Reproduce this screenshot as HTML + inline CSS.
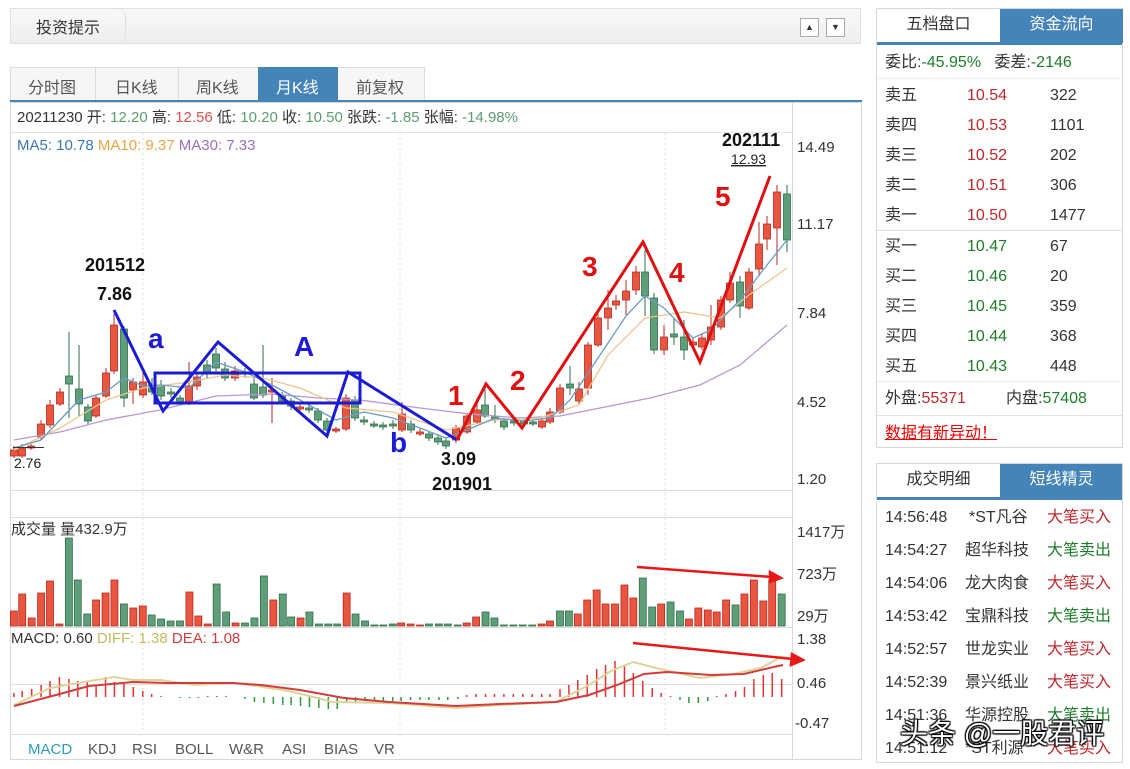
<!DOCTYPE html>
<html><head><meta charset="utf-8">
<style>
*{margin:0;padding:0;box-sizing:border-box}
body{width:1130px;height:769px;background:#fff;font-family:"Liberation Sans","Noto Sans CJK SC",sans-serif;position:relative;overflow:hidden;color:#333}
.a{position:absolute;white-space:nowrap}
.rp{position:absolute;border:1px solid #d8d8d8;background:#fff}
.tab2{position:absolute;top:0;height:34px;width:123px;font-size:16px;text-align:center;line-height:32px}
.row{position:absolute;left:8px;font-size:16px;height:20px;line-height:20px}
.r{color:#c0282c}.g{color:#1f7d2a}
</style></head><body>
<!-- top header -->
<div class="a" style="left:10px;top:8px;width:851px;height:36px;background:linear-gradient(#f9f9f9,#eeeeee);border:1px solid #e0e0e0"></div>
<div class="a" style="left:36px;top:14px;font-size:16px;color:#333">投资提示</div>
<div class="a" style="left:118px;top:9px;width:8px;height:34px;border-right:1px solid #e0e0e0;border-radius:0 8px 8px 0"></div>
<div class="a" style="left:800px;top:18px;width:19px;height:19px;border:1px solid #aaa;background:#fff;font-size:9px;text-align:center;line-height:17px">▲</div>
<div class="a" style="left:826px;top:18px;width:19px;height:19px;border:1px solid #aaa;background:#fff;font-size:9px;text-align:center;line-height:17px">▼</div>
<!-- tabs -->
<div class="a" style="left:10px;top:67px;width:415px;height:34px;background:#f6f6f6;border:1px solid #ddd"></div>
<div class="a" style="left:28px;top:74px;font-size:16px;color:#555">分时图</div>
<div class="a" style="left:95px;top:67px;height:34px;border-left:1px solid #ddd"></div>
<div class="a" style="left:115px;top:74px;font-size:16px;color:#555">日K线</div>
<div class="a" style="left:178px;top:67px;height:34px;border-left:1px solid #ddd"></div>
<div class="a" style="left:196px;top:74px;font-size:16px;color:#555">周K线</div>
<div class="a" style="left:258px;top:67px;width:80px;height:34px;background:#4584b8"></div>
<div class="a" style="left:276px;top:74px;font-size:16px;color:#fff">月K线</div>
<div class="a" style="left:356px;top:74px;font-size:16px;color:#555">前复权</div>
<div class="a" style="left:10px;top:100px;width:852px;height:3px;background:#4584b8"></div>

<svg class="a" style="left:0;top:0" width="870" height="769" id="ch" font-family="Liberation Sans, Noto Sans CJK SC, sans-serif">
<rect x="10.5" y="102.5" width="851" height="657" fill="none" stroke="#d8d8d8"/>
<line x1="792.5" y1="103" x2="792.5" y2="760" stroke="#d8d8d8"/>
<line x1="11" y1="132.5" x2="792" y2="132.5" stroke="#e4e4e4"/>
<line x1="11" y1="490.5" x2="792" y2="490.5" stroke="#ddd"/>
<line x1="11" y1="517.5" x2="792" y2="517.5" stroke="#ddd"/>
<line x1="11" y1="627.5" x2="792" y2="627.5" stroke="#ddd"/>
<line x1="11" y1="684.5" x2="792" y2="684.5" stroke="#ddd"/>
<line x1="11" y1="734.5" x2="792" y2="734.5" stroke="#ddd"/>
<g stroke="#ddd" stroke-dasharray="2,3"><line x1="143" y1="133" x2="143" y2="734"/><line x1="400" y1="133" x2="400" y2="734"/><line x1="665" y1="133" x2="665" y2="734"/></g>
<g id="cd"></g>
<polyline fill="none" stroke="#b798d0" stroke-width="1.3" points="14,440 60,432 106,420 160,410 216,396 272,394 318,398 360,400 420,408 470,414 520,418 560,416 600,408 650,398 700,385 740,365 787,325"/>
<polyline fill="none" stroke="#edc48c" stroke-width="1.3" points="14,450 60,428 106,400 143,388 189,382 225,375 263,378 300,388 346,408 393,412 446,430 495,420 540,418 579,405 608,355 645,318 684,312 720,318 749,295 787,268"/>
<polyline fill="none" stroke="#6a9cc4" stroke-width="1.3" points="14,448 41,440 60,420 79,400 106,392 124,378 143,386 161,385 189,388 216,362 245,372 272,385 300,400 336,420 364,412 393,418 420,428 446,438 467,430 495,418 524,421 550,418 570,400 598,358 626,316 645,296 664,308 693,338 711,330 740,300 767,265 787,240"/>
<g fill="none" stroke="#1b1bd6" stroke-width="3" stroke-linejoin="miter">
<polyline points="114,310 163,411 218,342 327,436 348,372 457,440"/>
<rect x="155" y="373" width="205" height="30"/>
</g>
<polyline fill="none" stroke="#e01010" stroke-width="3" points="457,440 486,384 522,428 643,242 700,362 770,176"/>
<g font-weight="bold" font-size="28" fill="#1b1bd6"><text x="148" y="348">a</text><text x="294" y="356">A</text><text x="390" y="452">b</text></g>
<g font-weight="bold" font-size="28" fill="#e01010"><text x="448" y="405">1</text><text x="510" y="390">2</text><text x="582" y="276">3</text><text x="669" y="282">4</text><text x="715" y="206">5</text></g>
<g font-weight="bold" font-size="18" fill="#111"><text x="85" y="271">201512</text><text x="97" y="300">7.86</text><text x="441" y="465">3.09</text><text x="432" y="490">201901</text><text x="722" y="146">202111</text></g>
<text x="731" y="164" font-size="14" fill="#222" text-decoration="underline">12.93</text>
<line x1="13" y1="447.5" x2="44" y2="447.5" stroke="#333"/>
<text x="14" y="468" font-size="14" fill="#222">2.76</text>
<g font-size="15" fill="#333"><text x="797" y="152">14.49</text><text x="797" y="229">11.17</text><text x="797" y="318">7.84</text><text x="797" y="407">4.52</text><text x="797" y="484">1.20</text>
<text x="797" y="537">1417万</text><text x="797" y="579">723万</text><text x="797" y="621">29万</text>
<text x="797" y="644">1.38</text><text x="797" y="688">0.46</text><text x="795" y="728">-0.47</text></g>
<g id="vol"></g>
<g id="mh"></g>
<polyline fill="none" stroke="#ddd49a" stroke-width="2" points="14,705 50,688 78,683 114,677 133,680 161,680 194,685 233,683 256,686 289,691 333,702 389,703 456,708 500,705 556,702 589,685 611,671 633,662 656,668 700,678 733,674 761,668 781,657 789,658"/>
<polyline fill="none" stroke="#d23c3c" stroke-width="2" points="14,706 56,695 89,686 133,682 167,683 233,683 261,685 300,690 344,698 389,702 456,706 500,704 556,702 589,695 617,685 644,674 667,672 711,675 744,674 778,666 783,665"/>
<g stroke="#e81818" stroke-width="2.5" fill="#e81818">
<line x1="637" y1="567" x2="772" y2="577"/><path d="M781,578 L770,572 L770,582 Z"/>
<line x1="633" y1="643" x2="793" y2="659"/><path d="M803,660 L792,654 L791,665 Z"/>
</g>
<text x="17" y="122" font-size="15"><tspan fill="#333">20211230 开: </tspan><tspan fill="#5a9e6e">12.20 </tspan><tspan fill="#333">高: </tspan><tspan fill="#d9534f">12.56 </tspan><tspan fill="#333">低: </tspan><tspan fill="#5a9e6e">10.20 </tspan><tspan fill="#333">收: </tspan><tspan fill="#5a9e6e">10.50 </tspan><tspan fill="#333">张跌: </tspan><tspan fill="#5a9e6e">-1.85 </tspan><tspan fill="#333">张幅: </tspan><tspan fill="#5a9e6e">-14.98%</tspan></text>
<text x="17" y="150" font-size="15"><tspan fill="#3a78b0">MA5: 10.78 </tspan><tspan fill="#e8a548">MA10: 9.37 </tspan><tspan fill="#9a70b8">MA30: 7.33</tspan></text>
<text x="11" y="534" font-size="15" fill="#333">成交量 量432.9万</text>
<text x="11" y="643" font-size="15"><tspan fill="#333">MACD: 0.60 </tspan><tspan fill="#c8b860">DIFF: 1.38 </tspan><tspan fill="#d23c3c">DEA: 1.08</tspan></text>
<g font-size="15" fill="#555"><text x="28" y="754" fill="#2f9cc0">MACD</text><text x="88" y="754">KDJ</text><text x="132" y="754">RSI</text><text x="175" y="754">BOLL</text><text x="229" y="754">W&amp;R</text><text x="282" y="754">ASI</text><text x="324" y="754">BIAS</text><text x="374" y="754">VR</text></g>
</svg>

<!-- right panel 1 -->
<div class="rp" style="left:876px;top:8px;width:247px;height:440px">
<div class="tab2" style="left:0;color:#333">五档盘口</div>
<div class="tab2" style="left:123px;background:#4584b8;color:#fff">资金流向</div>
<div class="a" style="left:0;top:33px;width:245px;height:3px;background:#4584b8"></div>
<div class="row" style="top:44px">委比:<span class="g">-45.95%</span>&nbsp;&nbsp; 委差:<span class="g">-2146</span></div>
<div class="a" style="left:0;top:69px;width:245px;border-top:1px dotted #ddd"></div>
<div class="row" style="top:77px">卖五</div><div class="row r" style="top:77px;left:90px">10.54</div><div class="row" style="top:77px;left:173px">322</div>
<div class="row" style="top:107px">卖四</div><div class="row r" style="top:107px;left:90px">10.53</div><div class="row" style="top:107px;left:173px">1101</div>
<div class="row" style="top:137px">卖三</div><div class="row r" style="top:137px;left:90px">10.52</div><div class="row" style="top:137px;left:173px">202</div>
<div class="row" style="top:167px">卖二</div><div class="row r" style="top:167px;left:90px">10.51</div><div class="row" style="top:167px;left:173px">306</div>
<div class="row" style="top:197px">卖一</div><div class="row r" style="top:197px;left:90px">10.50</div><div class="row" style="top:197px;left:173px">1477</div>
<div class="a" style="left:0;top:221px;width:245px;border-top:1px solid #ddd"></div>
<div class="row" style="top:228px">买一</div><div class="row g" style="top:228px;left:90px">10.47</div><div class="row" style="top:228px;left:173px">67</div>
<div class="row" style="top:258px">买二</div><div class="row g" style="top:258px;left:90px">10.46</div><div class="row" style="top:258px;left:173px">20</div>
<div class="row" style="top:288px">买三</div><div class="row g" style="top:288px;left:90px">10.45</div><div class="row" style="top:288px;left:173px">359</div>
<div class="row" style="top:318px">买四</div><div class="row g" style="top:318px;left:90px">10.44</div><div class="row" style="top:318px;left:173px">368</div>
<div class="row" style="top:348px">买五</div><div class="row g" style="top:348px;left:90px">10.43</div><div class="row" style="top:348px;left:173px">448</div>
<div class="a" style="left:0;top:372px;width:245px;border-top:1px dotted #ddd"></div>
<div class="row" style="top:380px">外盘:<span class="r">55371</span></div><div class="row" style="top:380px;left:129px">内盘:<span class="g">57408</span></div>
<div class="a" style="left:0;top:406px;width:245px;border-top:1px solid #e4e4e4"></div>
<div class="row" style="top:415px;color:#e00;text-decoration:underline">数据有新异动！</div>
</div>
<!-- right panel 2 -->
<div class="rp" style="left:876px;top:463px;width:247px;height:300px;overflow:hidden">
<div class="tab2" style="left:0;color:#333">成交明细</div>
<div class="tab2" style="left:123px;background:#4584b8;color:#fff">短线精灵</div>
<div class="a" style="left:0;top:33px;width:245px;height:3px;background:#4584b8"></div>
<div class="row" style="top:44px">14:56:48</div><div class="row" style="top:44px;left:92px">*ST凡谷</div><div class="row r" style="top:44px;left:170px">大笔买入</div>
<div class="row" style="top:77px">14:54:27</div><div class="row" style="top:77px;left:88px">超华科技</div><div class="row g" style="top:77px;left:170px">大笔卖出</div>
<div class="row" style="top:110px">14:54:06</div><div class="row" style="top:110px;left:88px">龙大肉食</div><div class="row r" style="top:110px;left:170px">大笔买入</div>
<div class="row" style="top:143px">14:53:42</div><div class="row" style="top:143px;left:88px">宝鼎科技</div><div class="row g" style="top:143px;left:170px">大笔卖出</div>
<div class="row" style="top:176px">14:52:57</div><div class="row" style="top:176px;left:88px">世龙实业</div><div class="row r" style="top:176px;left:170px">大笔买入</div>
<div class="row" style="top:209px">14:52:39</div><div class="row" style="top:209px;left:88px">景兴纸业</div><div class="row r" style="top:209px;left:170px">大笔买入</div>
<div class="row" style="top:242px">14:51:36</div><div class="row" style="top:242px;left:88px">华源控股</div><div class="row g" style="top:242px;left:170px">大笔卖出</div>
<div class="row" style="top:275px">14:51:12</div><div class="row" style="top:275px;left:88px">*ST利源</div><div class="row r" style="top:275px;left:170px">大笔买入</div>
</div>
<div class="a" style="left:900px;top:712px;font-size:28px;color:#fff;text-shadow:0 0 2px #000,1px 1px 1px #000,-1px -1px 1px #000,1px -1px 1px #000,-1px 1px 1px #000">头条 @一股君评</div>

<script>
var NS="http://www.w3.org/2000/svg";
function el(p,t,a){var e=document.createElementNS(NS,t);for(var k in a)e.setAttribute(k,a[k]);p.appendChild(e);return e;}
var C=[[14,450,456,446,458,'r'],[22,448,456,444,458,'r'],[31,446,448,444,450,'r'],[41,424,437,420,440,'r'],[50,405,425,400,428,'r'],[60,392,404,388,406,'r'],[69,376,384,332,418,'g'],[79,389,404,345,416,'g'],[88,407,421,404,424,'g'],[96,398,416,395,418,'r'],[106,373,396,368,398,'r'],[114,325,371,314,374,'r'],[124,329,398,326,407,'g'],[133,382,390,378,404,'r'],[143,382,395,368,398,'r'],[152,385,392,378,395,'g'],[161,385,396,380,400,'g'],[171,392,394,388,398,'g'],[180,398,402,395,404,'g'],[189,386,402,362,405,'r'],[197,377,386,372,390,'r'],[207,365,372,360,378,'g'],[216,354,368,348,372,'g'],[225,369,378,362,381,'g'],[235,371,378,366,381,'r'],[245,372,374,368,378,'g'],[254,384,398,376,400,'g'],[263,387,395,345,398,'g'],[272,390,392,378,423,'r'],[282,396,401,392,404,'g'],[291,401,406,398,410,'g'],[300,407,409,404,412,'r'],[309,408,410,405,413,'g'],[318,411,420,408,423,'g'],[327,421,430,418,433,'g'],[336,429,431,427,433,'r'],[346,398,429,394,431,'r'],[355,400,418,396,421,'g'],[364,420,422,416,425,'g'],[374,424,426,421,428,'g'],[383,425,427,422,430,'g'],[393,424,426,420,429,'g'],[402,414,430,402,432,'r'],[411,424,430,420,433,'g'],[420,432,434,429,436,'r'],[429,434,438,431,441,'g'],[438,438,442,435,445,'g'],[446,441,446,438,449,'g'],[456,428,440,425,443,'r'],[467,416,432,413,434,'r'],[477,410,422,404,424,'r'],[485,405,416,385,418,'g'],[495,417,420,405,423,'g'],[504,421,427,418,430,'g'],[514,421,423,418,426,'g'],[524,421,424,418,426,'g'],[533,422,424,420,426,'g'],[542,421,427,418,429,'r'],[550,412,422,408,424,'r'],[560,388,412,384,414,'r'],[570,384,388,366,395,'g'],[579,389,401,382,405,'r'],[588,345,388,342,395,'r'],[598,318,345,312,347,'r'],[608,308,318,290,330,'r'],[616,301,305,295,310,'r'],[626,291,300,280,315,'r'],[636,272,290,266,295,'r'],[645,272,296,250,316,'g'],[654,298,350,293,354,'g'],[664,337,350,325,355,'r'],[674,334,337,318,345,'g'],[684,337,350,320,360,'g'],[693,342,345,338,348,'r'],[702,338,347,333,350,'r'],[711,327,340,305,345,'r'],[721,300,327,296,330,'r'],[730,283,300,272,303,'r'],[740,282,306,276,318,'g'],[749,272,308,268,310,'r'],[759,244,269,222,275,'r'],[767,224,239,216,250,'r'],[777,192,228,185,265,'r'],[787,194,240,185,252,'g']];
var cd=document.getElementById('cd');
var FR={r:'#e8563f',g:'#5e9e78'},ST={r:'#b82a20',g:'#2f6e4a'};
C.forEach(function(c){var x=c[0];el(cd,'line',{x1:x,y1:c[3],x2:x,y2:c[4],stroke:ST[c[5]],'stroke-width':1});
var h=Math.max(2,c[2]-c[1]);el(cd,'rect',{x:x-3.5,y:c[1],width:7,height:h,fill:FR[c[5]],stroke:ST[c[5]],'stroke-width':0.8});});
var V=[[25,15,'r'],[40,32,'r'],[57,8,'r'],[74,33,'r'],[90,45,'r'],[107,2,'r'],[124,88,'g'],[140,46,'g'],[157,12,'g'],[173,26,'r'],[190,33,'r'],[206,46,'r'],[223,22,'g'],[240,18,'r'],[257,20,'r'],[273,11,'g'],[290,7,'g'],[307,5,'g'],[324,5,'g'],[341,34,'r'],[357,10,'r'],[374,2,'r'],[390,42,'g'],[407,14,'g'],[424,3,'r'],[441,3,'g'],[458,8,'g'],[475,50,'g'],[492,26,'r'],[509,32,'g'],[524,9,'g'],[541,8,'r'],[557,14,'g'],[574,2,'g'],[591,2,'g'],[607,2,'g'],[624,33,'r'],[640,12,'g'],[657,5,'g'],[674,1,'g'],[690,1,'g'],[707,2,'g'],[722,3,'r'],[739,2,'r'],[756,1,'r'],[772,2,'g'],[790,2,'g'],[806,2,'g'],[824,1,'g'],[840,3,'r'],[857,9,'r'],[874,14,'g'],[890,8,'g'],[907,1,'g'],[924,1,'g'],[941,1,'g'],[958,1,'g'],[975,2,'r'],[990,5,'r'],[1008,15,'g'],[1024,15,'g'],[1040,12,'r'],[1057,26,'r'],[1074,36,'r'],[1090,22,'r'],[1107,22,'r'],[1124,41,'r'],[1140,28,'r'],[1157,48,'g'],[1174,19,'g'],[1190,22,'r'],[1207,24,'g'],[1224,15,'g'],[1240,7,'r'],[1257,18,'r'],[1274,16,'r'],[1290,14,'r'],[1307,26,'r'],[1324,21,'g'],[1340,32,'r'],[1357,46,'r'],[1374,25,'r'],[1390,46,'r'],[1407,32,'g']];
var vg=document.getElementById('vol');
V.forEach(function(v){var x=v[0]/1.8;el(vg,'rect',{x:x-3.5,y:626-v[1],width:7,height:v[1],fill:FR[v[2]],stroke:ST[v[2]],'stroke-width':0.8});});
var M=[[25,4],[40,6],[57,8],[74,12],[90,16],[107,20],[124,18],[140,16],[157,15],[173,12],[190,20],[206,15],[223,13],[240,10],[257,6],[273,3],[290,1],[324,-1],[341,-1],[357,-1],[374,1],[390,1],[407,1],[441,-2],[458,-5],[475,-6],[492,-7],[509,-8],[524,-8],[541,-9],[557,-10],[574,-11],[591,-12],[607,-12],[624,-5],[640,-5],[657,-4],[674,-4],[690,-4],[707,-4],[722,-4],[739,-3],[756,-3],[772,-3],[790,-3],[806,-3],[824,-2],[840,2],[857,3],[874,3],[890,3],[907,3],[924,3],[941,3],[958,3],[975,3],[990,3],[1008,8],[1024,12],[1040,17],[1057,22],[1074,28],[1090,32],[1107,36],[1124,31],[1140,24],[1157,16],[1174,9],[1190,4],[1207,1],[1224,-3],[1240,-6],[1257,-6],[1274,-4],[1290,1],[1307,3],[1324,6],[1340,10],[1357,18],[1374,22],[1390,24],[1407,18]];
var mg=document.getElementById('mh');
M.forEach(function(m){var x=m[0]/1.8,b=697;el(mg,'line',{x1:x,y1:b,x2:x,y2:b-m[1],stroke:m[1]>0?'#e83030':'#2f9a3a','stroke-width':1.5});});
</script>
</body></html>
